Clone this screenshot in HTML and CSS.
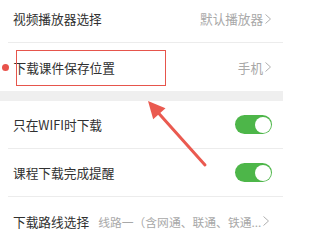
FILE: index.html
```html
<!DOCTYPE html>
<html lang="zh-CN">
<head>
<meta charset="utf-8">
<link rel="stylesheet" href="styles.css">
</head>
<body>
<div class="page">
  <div class="group">
    <div class="row bordered">
      <span class="label">视频播放器选择</span>
      <span class="value">默认播放器</span>
      <svg class="chev" width="6" height="10" viewBox="0 0 6 10"><polyline points="0.5,0.5 5.5,5 0.5,9.5" fill="none" stroke="#b0b0b0" stroke-width="1"/></svg>
    </div>
    <div class="row row-dot">
      <span class="dot"></span>
      <span class="label">下载课件保存位置</span>
      <span class="value">手机</span>
      <svg class="chev" width="6" height="10" viewBox="0 0 6 10"><polyline points="0.5,0.5 5.5,5 0.5,9.5" fill="none" stroke="#b0b0b0" stroke-width="1"/></svg>
    </div>
  </div>
  <div class="band"></div>
  <div class="group">
    <div class="row bordered">
      <span class="label">只在WIFI时下载</span>
      <span class="toggle"><span class="knob"></span></span>
    </div>
    <div class="row bordered">
      <span class="label">课程下载完成提醒</span>
      <span class="toggle"><span class="knob"></span></span>
    </div>
    <div class="row">
      <span class="label">下载路线选择</span>
      <span class="value small">线路一（含网通、联通、铁通...</span>
      <svg class="chev" width="6" height="10" viewBox="0 0 6 10"><polyline points="0.5,0.5 5.5,5 0.5,9.5" fill="none" stroke="#b0b0b0" stroke-width="1"/></svg>
    </div>
  </div>
  <div class="highlight"></div>
  <svg class="arrow" width="283" height="240" viewBox="0 0 283 240">
    <line x1="205" y1="165" x2="158" y2="112.5" stroke="#ea5a50" stroke-width="3" stroke-linecap="round"/>
    <polygon points="148,101 165.5,108.2 153.2,119.2" fill="#ea5a50"/>
  </svg>
</div>
</body>
</html>
```
FILE: styles.css
```css
html, body {
  margin: 0;
  padding: 0;
  background: #ffffff;
}
.page {
  position: relative;
  width: 283px;
  height: 240px;
  overflow: hidden;
  font-family: "Noto Sans CJK SC", "Noto Sans", sans-serif;
}
.group {
  display: flex;
  flex-direction: column;
}
.group:first-child {
  margin-top: -5px;
}
.row {
  display: flex;
  align-items: center;
  height: 48px;
  padding: 0 12px 0 13px;
  box-sizing: border-box;
}
.bordered {
  height: 48px;
  margin-left: 8px;
  padding-left: 5px;
  border-bottom: 1px solid #ececec;
}
.row-dot {
  padding-left: 1.5px;
}
.dot {
  width: 7px;
  height: 7px;
  border-radius: 50%;
  background: #e8524b;
  margin-right: 5px;
  flex: none;
}
.label {
  font-size: 12.7px;
  color: #303030;
  white-space: nowrap;
  flex: none;
}
.value {
  margin-left: auto;
  font-size: 12.6px;
  color: #a8a8a8;
  white-space: nowrap;
}
.value.small {
  margin-left: 9px;
  font-size: 11.8px;
}
.chev {
  flex: none;
  margin-left: 2px;
}
.toggle {
  margin-left: auto;
  margin-right: -1px;
  width: 37px;
  height: 19px;
  border-radius: 10px;
  background: #4db649;
  display: flex;
  align-items: center;
  justify-content: flex-end;
  padding: 0 1.5px;
  box-sizing: border-box;
}
.knob {
  width: 16px;
  height: 16px;
  border-radius: 50%;
  background: #ffffff;
}
.band {
  height: 10px;
  background: #efefef;
}
.highlight {
  position: absolute;
  left: 16px;
  top: 50px;
  width: 150px;
  height: 36px;
  box-sizing: border-box;
  border: 1.5px solid #e6554c;
}
.arrow {
  position: absolute;
  left: 0;
  top: 0;
}
```
